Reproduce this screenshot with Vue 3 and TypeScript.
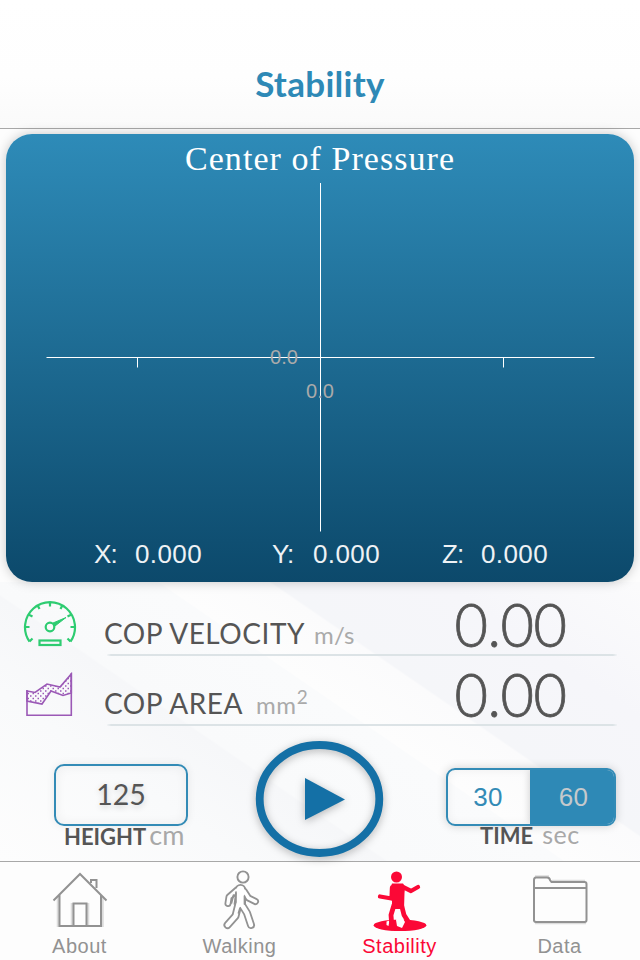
<script setup lang="ts">
import { ref } from 'vue'

interface Readout { axis: string; value: string }
interface Tab { id: string; label: string }

const readouts: Readout[] = [
  { axis: 'X:', value: '0.000' },
  { axis: 'Y:', value: '0.000' },
  { axis: 'Z:', value: '0.000' },
]
const tabs: Tab[] = [
  { id: 'about', label: 'About' },
  { id: 'walking', label: 'Walking' },
  { id: 'stability', label: 'Stability' },
  { id: 'data', label: 'Data' },
]
const activeTab = ref('stability')
const durations = [30, 60]
const duration = ref(60)
const height = ref(125)
</script>

<template>
  <div class="screen">
    <header class="navbar"><h1>Stability</h1></header>

    <main>
      <section class="card">
        <h2>Center of Pressure</h2>
        <svg class="plot" width="628" height="350" viewBox="6 183 628 350">
          <path d="M46.500 357.500H594.500M320.500 183V531.500M137.500 357V367.500M503.500 357V367.500" fill="none" stroke="#fff" />
          <text x="284" y="364" text-anchor="middle">0.0</text>
          <text x="320" y="398" text-anchor="middle">0.0</text>
        </svg>
        <div class="readouts">
          <div v-for="r in readouts" :key="r.axis" class="readout">
            <span class="axis">{{ r.axis }}</span><span class="num">{{ r.value }}</span>
          </div>
        </div>
      </section>

      <section class="panel">
        <div class="metric">
          <svg class="icon" width="54" height="48" viewBox="23 600 54 48" fill="none" stroke="#2ecc71" stroke-width="2.200">
            <path d="M29.500 641.500A25 25 0 1 1 70.500 641.500M29.500 641.500L32.500 638.500M70.500 641.500L67.500 638.500M25 627H29.500M75 627H70.500M50 602V606.500M37.500 605L39.500 609M62.500 605L60.500 609M28.500 614.500L32.500 616.500M71.500 614.500L67.500 616.500" />
            <circle cx="50" cy="627" r="4.300" />
            <path d="M53 623L66 617.500L55 626Z" fill="#2ecc71" stroke-width="1" />
            <rect x="39.500" y="640.500" width="21" height="4.500" />
          </svg>
          <div class="line">
            <span class="name">COP VELOCITY</span><span class="unit">m/s</span>
            <span class="value">0.00</span>
          </div>
        </div>
        <div class="metric">
          <svg class="icon" width="54" height="48" viewBox="23 670 54 48" fill="none" stroke="#9b59b6" stroke-width="1.600">
            <defs>
              <pattern id="dots" width="5" height="5" patternUnits="userSpaceOnUse">
                <path d="M0 1H1.500M2.500 3.500H4" stroke="#9b59b6" stroke-width="1.400" />
              </pattern>
            </defs>
            <path d="M27 691L35 692.500L47 684L60 687L71.300 674V693L63 695.500L51 691L42 704L27 701Z" fill="url(#dots)" />
            <path d="M27 690V715.300H71.300V673" />
          </svg>
          <div class="line">
            <span class="name">COP AREA</span><span class="unit mm">mm<sup>2</sup></span>
            <span class="value">0.00</span>
          </div>
        </div>

        <div class="controls">
          <div class="field">
            <div class="input">{{ height }}</div>
            <p><b>HEIGHT</b><span class="cm">cm</span></p>
          </div>
          <svg class="play" width="160" height="135" viewBox="240 727 160 135">
            <ellipse cx="319.500" cy="799" rx="59.800" ry="54" fill="none" stroke="#1470a6" stroke-width="7.800" />
            <path d="M305 778L345 799.500L305 820Z" fill="#1470a6" />
          </svg>
          <div class="time">
            <div class="segments">
              <button v-for="d in durations" :key="d" :class="{ on: d === duration }" @click="duration = d">{{ d }}</button>
            </div>
            <p><b>TIME</b><span class="sec">sec</span></p>
          </div>
        </div>
      </section>
    </main>

    <nav>
      <a v-for="t in tabs" :key="t.id" :class="{ active: t.id === activeTab }" @click="activeTab = t.id">
        <svg v-if="t.id === 'about'" width="64" height="64" viewBox="48 868 64 64" fill="none" stroke="#929292" stroke-width="2">
          <path d="M58 896V927M102.500 896V927M72 903V925M88 903V925" stroke="#dcdcdc" stroke-width="2.500" />
          <path d="M53.500 900.500L80 874L106.500 900.500M59.500 895V926H101V895M73.500 926V903.500H86.500V926M91 883V880H96.500V888" />
        </svg>
        <svg v-else-if="t.id === 'walking'" width="64" height="64" viewBox="208 868 64 64" fill="none" stroke-linecap="round" stroke-linejoin="round">
          <circle cx="243" cy="877" r="5.600" stroke="#929292" stroke-width="1.900" />
          <g stroke="#929292">
            <path d="M240.500 889.500V903" stroke-width="11" />
            <path d="M237 890L229 897L228 903.500M244 891L248.500 898L255.500 901.500" stroke-width="7" />
            <path d="M238.500 904L235.500 916L227.500 925M242 905L247 913L251 925" stroke-width="8" />
          </g>
          <g stroke="#fff">
            <path d="M240.500 889.500V903" stroke-width="7.400" />
            <path d="M237 890L229 897L228 903.500M244 891L248.500 898L255.500 901.500" stroke-width="3.400" />
            <path d="M238.500 904L235.500 916L227.500 925M242 905L247 913L251 925" stroke-width="4.400" />
          </g>
          <path d="M236 892L234.500 904M244.500 896V904M233.500 895L231.500 903M240 908L238.500 913" stroke="#929292" stroke-width="1.700" />
        </svg>
        <svg v-else-if="t.id === 'stability'" width="64" height="64" viewBox="368 868 64 64">
          <ellipse cx="400" cy="925.300" rx="26.300" ry="5.800" fill="#fb0836" />
          <path d="M386.500 921.500L389.500 920.500L388.500 926L386.500 925ZM399 912L396 920L397 926L402 928L405 922Z" fill="#fdfdfd" />
          <g fill="none" stroke="#fb0836" stroke-linecap="round" stroke-linejoin="round">
            <path d="M392 887.500L391.500 898.500L380 896.500M403 887L411 891L418 887" stroke-width="4.300" />
            <path d="M394 905L391 915L392 928M401.500 905L404 915L411 926" stroke-width="4.800" />
          </g>
          <circle cx="396.500" cy="877" r="5.500" fill="#fb0836" />
          <path d="M392 883.500H403Q405.500 886 404.500 893L404 909H392V896L390 889Z" fill="#fb0836" />
        </svg>
        <svg v-else width="64" height="64" viewBox="528 868 64 64" fill="none" stroke="#929292" stroke-width="2">
          <path d="M535 876.500H549M552 881H585M535 923H586" stroke="#dcdcdc" stroke-width="2.500" />
          <path d="M534 921V880Q534 877.500 536 877.500H547Q549.500 877.500 550 880L551.500 882H584.500Q586.500 882 586.500 884V920Q586.500 922 584.500 922H536Q534 922 534 920M534 888H586.500" />
        </svg>
        <span class="tab-label">{{ t.label }}</span>
      </a>
    </nav>
  </div>
</template>

<style>
body { margin: 0; background: #fff; }
</style>

<style scoped>
* { box-sizing: border-box; }
.screen { width: 640px; height: 960px; overflow: hidden; display: flex; flex-direction: column; font-family: Lato, sans-serif; color: #555; background: #fdfdfd; }
.navbar { height: 129px; flex: none; padding-top: 59px; border-bottom: 1px solid #a8a8a8; background: linear-gradient(#fff, #fefefe 60%, #fafafa); text-align: center; }
h1 { margin: 0; font-size: 35px; line-height: 48px; font-weight: 700; color: #2e89b6; letter-spacing: .3px; }
main { height: 732px; flex: none; display: flex; flex-direction: column; padding-top: 5px; }
.card { position: relative; z-index: 1; flex: none; width: 628px; height: 448px; margin: 0 6px; border-radius: 26px; background: linear-gradient(#2e8bb8, #0c496b); box-shadow: 0 0 12px rgba(0,0,0,.22); display: flex; flex-direction: column; }
h2 { margin: 0; height: 49px; text-align: center; color: #fff; font: 400 34px/50px "Liberation Serif", serif; letter-spacing: 1.05px; }
.plot { display: block; flex: none; }
.plot text { font: 20px "Liberation Sans", sans-serif; fill: #aaa; }
.readouts { display: flex; padding-left: 88px; color: #eef2f5; font: 26px/30px "Liberation Sans", sans-serif; margin-top: 6px; }
.readout { display: flex; width: 178px; }
.readout:last-child { margin-left: -8px; }
.readout:last-child .axis { width: 39px; }
.axis { width: 41px; letter-spacing: -.8px; }
.num { letter-spacing: .4px; }
.panel { height: 279px; background: linear-gradient(34.5deg, #fdfdfd 0, #f9fafb 140px, #f6f7f9 218px, #f9fafb 220px, #fafbfc 319px, #fdfdfd 320px, #fbfbfc 382px, #f5f6f9 384px, #f6f6fa 480px, #fbfbfc 590px); }
.metric { display: flex; height: 70px; padding-left: 23px; }
.metric:first-child { margin-top: 4px; }
.icon { flex: none; margin-top: 14px; }
.line { width: 510px; height: 70px; margin-left: 30px; display: flex; align-items: flex-start; border-bottom: 2px solid; border-image: linear-gradient(90deg, transparent, #dce3e6 1%, #dce3e6 99%, transparent) 1; }
.name { font-size: 28px; line-height: 34px; margin-top: 30px; white-space: nowrap; margin-left: -3px; letter-spacing: .55px; }
.unit { font-size: 24px; line-height: 30px; margin-top: 34px; color: #aaa; margin-left: 9px; white-space: nowrap; letter-spacing: .1px; }
.unit.mm { margin-left: 13px; letter-spacing: .6px; }
sup { font-size: 19px; line-height: 0; vertical-align: 10px; }
.value { margin-left: auto; margin-right: 51px; margin-top: 2px; font-size: 61px; line-height: 72px; font-weight: 300; transform: scaleX(.945); transform-origin: right; letter-spacing: -.5px; -webkit-text-stroke: .8px #555; }
.controls { display: flex; }
.field { width: 134px; margin: 38px 0 0 54px; flex: none; }
.input { height: 62px; border: 2px solid #338bb6; border-radius: 10px; box-shadow: 0 0 9px rgba(0,0,0,.08), inset 0 0 12px rgba(0,0,0,.06); text-align: center; font-size: 28.500px; line-height: 57px; text-shadow: 0 2px 6px rgba(0,0,0,.18); }
p { margin: -3px 0 0; display: flex; align-items: baseline; line-height: 24px; height: 24px; white-space: nowrap; }
.field p { padding-left: 10px; }
b { font-size: 22px; }
.cm, .sec { color: #a8a8a8; }
.cm { font-size: 27px; margin-left: 3px; }
.play { flex: none; margin: 1px 0 0 52px; filter: drop-shadow(0 2px 4px rgba(0,0,0,.28)); }
.time { width: 170px; margin: 42px 0 0 46px; flex: none; }
.segments { height: 58px; display: flex; border: 2px solid #338bb6; border-radius: 9px; overflow: hidden; box-shadow: 0 0 10px rgba(0,0,0,.18), inset 0 0 10px rgba(0,0,0,.06); }
button { border: 0; padding: 0 2px 0 0; width: 82px; background: transparent; color: #338bb6; font: 26px "Liberation Sans", sans-serif; letter-spacing: .3px; }
button.on { flex: 1; padding: 0 0 0 3px; background: #2e89b6; color: #c5c9cc; box-shadow: 0 0 8px rgba(0,0,0,.2); }
.time p { padding-left: 34px; margin-top: -4px; }
.sec { font-size: 25px; margin-left: 9px; letter-spacing: .5px; }
nav { height: 99px; flex: none; border-top: 1px solid #a8a8a8; background: #fdfdfd; display: grid; grid-template-columns: repeat(4, 160px); }
nav a { display: flex; flex-direction: column; align-items: center; padding-top: 6px; color: #929292; }
.tab-label { font: 20px/24px "Liberation Sans", sans-serif; letter-spacing: .5px; margin-top: 2px; padding-right: 1px; }
a.active { color: #fb0836; }
</style>
